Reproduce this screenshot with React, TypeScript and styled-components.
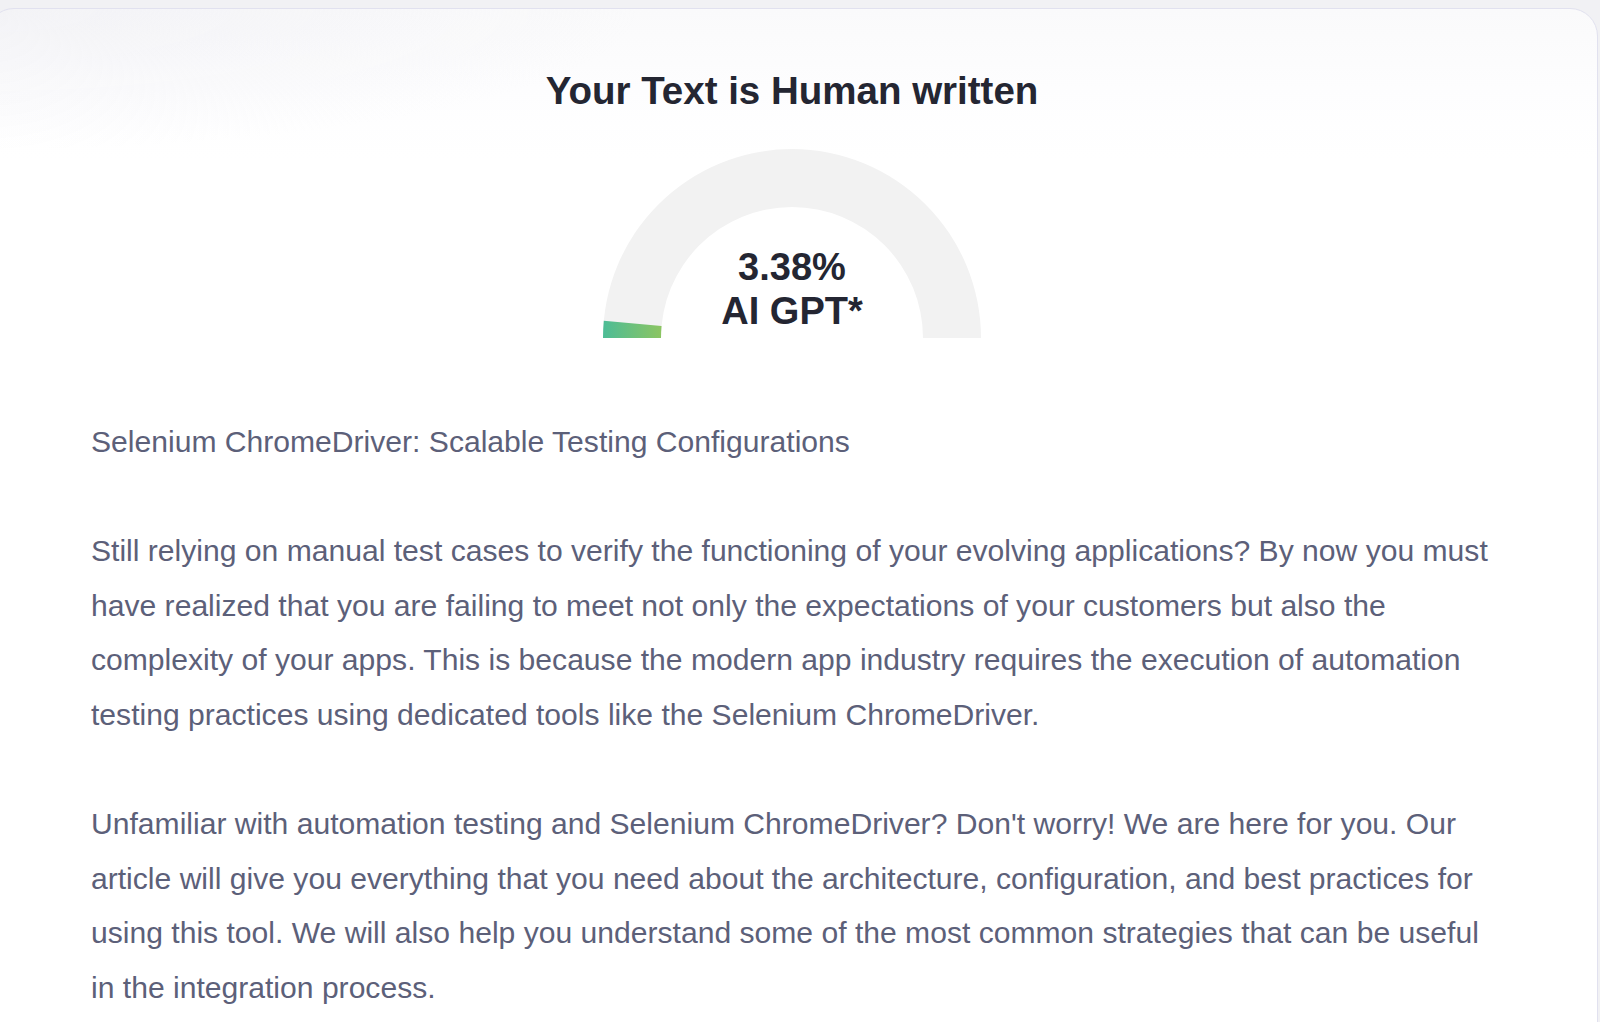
import React from "react";
import styled, { createGlobalStyle } from "styled-components";

const GlobalStyle = createGlobalStyle`
  html, body {
    margin: 0;
    padding: 0;
    background: #f1f1f4;
    overflow: hidden;
  }
  body {
    font-family: "Liberation Sans", Arial, sans-serif;
  }
`;

const Page = styled.div`
  padding-top: 8px;
  height: 1022px;
  box-sizing: border-box;
  overflow: hidden;
`;

const Card = styled.section`
  margin-left: -14px;
  margin-right: 2px;
  min-height: 1040px;
  box-sizing: border-box;
  padding: 60px 105px 0;
  border: 1px solid #e1e1ef;
  border-radius: 28px;
  background:
    radial-gradient(ellipse 650px 140px at 0 0, rgba(238, 238, 243, 0.6), rgba(255, 255, 255, 0) 100%),
    linear-gradient(180deg, #fafafb 0px, #fdfdfe 80px, #ffffff 150px);
`;

const Title = styled.h1`
  margin: 0;
  text-align: center;
  font-size: 38.5px;
  line-height: 44px;
  font-weight: 700;
  color: #242632;
`;

const GaugeWrap = styled.div`
  position: relative;
  width: 378px;
  height: 189px;
  margin: 36px auto 0;
`;

const GaugeLabel = styled.div`
  position: absolute;
  left: 0;
  right: 0;
  bottom: 5px;
  text-align: center;
  font-size: 38px;
  line-height: 44px;
  font-weight: 700;
  color: #242632;
`;

const Article = styled.article`
  margin: 77px 0 0 -1px;
  color: #5c6079;
  font-size: 30.1px;
  line-height: 54.6px;
`;

const Para = styled.p`
  margin: 0 0 54.6px;
`;

interface GaugeProps {
  percent: number;
  label: string;
}

const Gauge: React.FC<GaugeProps> = ({ percent, label }) => {
  const cx = 189;
  const cy = 189;
  const ro = 189;
  const ri = 131;
  const deg = Math.max(percent * 1.55, 0);
  const a = (deg * Math.PI) / 180;
  const ox = cx - ro * Math.cos(a);
  const oy = cy - ro * Math.sin(a);
  const ix = cx - ri * Math.cos(a);
  const iy = cy - ri * Math.sin(a);
  const track = `M ${cx - ro} ${cy} A ${ro} ${ro} 0 0 1 ${cx + ro} ${cy} L ${cx + ri} ${cy} A ${ri} ${ri} 0 0 0 ${cx - ri} ${cy} Z`;
  const fill = `M ${cx - ro} ${cy} A ${ro} ${ro} 0 0 1 ${ox} ${oy} L ${ix} ${iy} A ${ri} ${ri} 0 0 0 ${cx - ri} ${cy} Z`;
  return (
    <GaugeWrap>
      <svg width="378" height="189" viewBox="0 0 378 189">
        <defs>
          <linearGradient id="gaugeFill" x1="0" y1="0" x2="1" y2="0">
            <stop offset="0" stopColor="#4cbc96" />
            <stop offset="1" stopColor="#8cc562" />
          </linearGradient>
        </defs>
        <path d={track} fill="#f2f2f2" />
        <path d={fill} fill="url(#gaugeFill)" />
      </svg>
      <GaugeLabel>
        {percent.toFixed(2)}%
        <br />
        {label}
      </GaugeLabel>
    </GaugeWrap>
  );
};

const App: React.FC = () => {
  return (
    <Page>
      <GlobalStyle />
      <Card>
        <Title>Your Text is Human written</Title>
        <Gauge percent={3.38} label="AI GPT*" />
        <Article>
          <Para>Selenium ChromeDriver: Scalable Testing Configurations</Para>
          <Para>
            Still relying on manual test cases to verify the functioning of your evolving
            applications? By now you must have realized that you are failing to meet not only the
            expectations of your customers but also the complexity of your apps. This is because
            the modern app industry requires the execution of automation testing practices using
            dedicated tools like the Selenium ChromeDriver.
          </Para>
          <Para>
            Unfamiliar with automation testing and Selenium ChromeDriver? Don't worry! We are here
            for you. Our article will give you everything that you need about the architecture,
            configuration, and best practices for using this tool. We will also help you
            understand some of the most common strategies that can be useful in the integration
            process.
          </Para>
        </Article>
      </Card>
    </Page>
  );
};

export default App;
